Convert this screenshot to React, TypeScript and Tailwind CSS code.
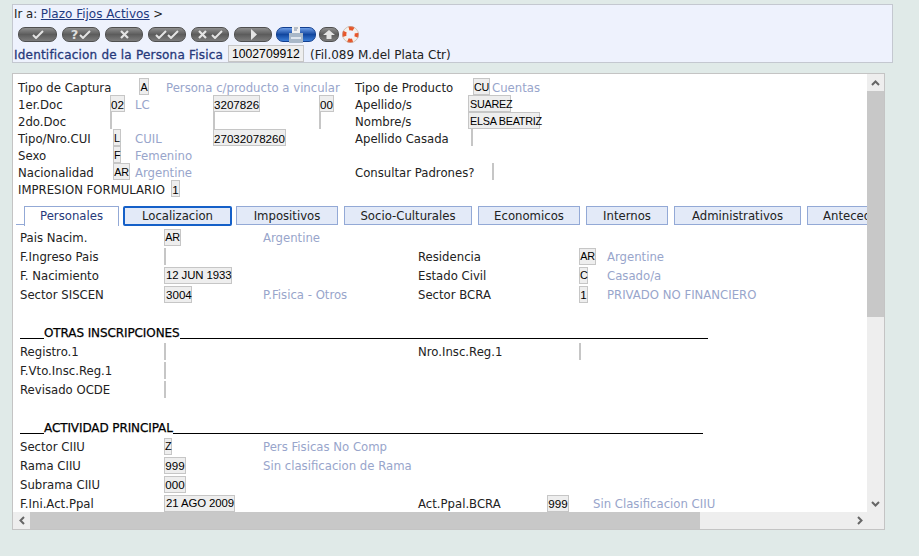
import React from 'react';

const TOP = 'leading-[17px]';
const BODY = 'leading-[15px]';
const CAPS = 'text-[10.8px] tracking-[-0.25px]';
const DATE = 'text-[11.4px] tracking-[-0.1px]';

function Field({ value = '', className = '', lh = TOP }: { value?: string; className?: string; lh?: string }) {
  return (
    <span className={`block h-[17px] shrink-0 whitespace-nowrap border border-[#c6c6c6] bg-[#eeeeee] font-['Liberation_Sans',sans-serif] text-black ${lh} ${className}`}>
      {value}
    </span>
  );
}

function Muted({ children }: { children: React.ReactNode }) {
  return <span className="text-[#98a5cb]">{children}</span>;
}

function ToolButton({ children, blue = false, className = 'w-[38px]' }: { children: React.ReactNode; blue?: boolean; className?: string }) {
  const tone = blue
    ? 'border-[#123f8f] bg-gradient-to-b from-[#6f9fe8] via-[#12479f] to-[#3b7ed8]'
    : 'border-[#4f4f4f] bg-gradient-to-b from-[#8f8f8f] via-[#5c5c5c] to-[#7c7c7c]';
  return (
    <span className={`flex h-[15px] shrink-0 items-center justify-center rounded-[7px] border ${tone} ${className}`}>
      {children}
    </span>
  );
}

const Check = () => (
  <svg width="12" height="9" viewBox="0 0 12 9" fill="none" stroke="#e4e4e4" strokeWidth="2"><path d="M1 5l3 3 7-7" /></svg>
);
const Cross = () => (
  <svg width="9" height="9" viewBox="0 0 9 9" fill="none" stroke="#e4e4e4" strokeWidth="2.2"><path d="M1 1l7 7M8 1l-7 7" /></svg>
);

function Tab({ label, className }: { label: string; className: string }) {
  return (
    <div className={`flex h-[19px] shrink-0 items-center justify-center border border-[#93a9d6] bg-[#e3eaf8] pt-[2px] ${className}`}>
      {label}
    </div>
  );
}

function Row({ children }: { children: React.ReactNode }) {
  return <div className="flex h-[17px] text-[11.7px] leading-[21px]">{children}</div>;
}

function BodyRow({ children }: { children: React.ReactNode }) {
  return <div className="flex h-[19px] items-start leading-[19px]">{children}</div>;
}

function Section({ title, className }: { title: string; className: string }) {
  return (
    <div className={`mt-[19px] flex h-[19px] leading-[19px] ${className}`}>
      <span className="h-[15px] w-[24px] shrink-0 border-b border-black" />
      <span className="text-[12px] tracking-[-0.1px] text-black [-webkit-text-stroke:0.25px_#000]">{title}</span>
      <span className="h-[15px] flex-1 border-b border-black" />
    </div>
  );
}

export default function App() {
  return (
    <div className="h-[556px] w-[919px] overflow-hidden bg-[#e0eae8] pl-3 pt-1 font-['DejaVu_Sans',sans-serif] text-[11.7px] text-[#222]">
      {/* cabecera */}
      <div className="h-[59px] w-[881px] border border-[#c4c8d0] bg-[#eef2fd] pl-[1px]">
        <div className="h-[19px] pt-[1px] leading-[17px]">
          Ir a: <span className="text-[12px] text-[#1f3a80] underline">Plazo Fijos Activos</span> &gt;
        </div>
        <div className="flex h-[21px] items-center gap-[5px] pb-[1px] pl-[4px]">
          <ToolButton className="w-[39px]"><Check /></ToolButton>
          <ToolButton><span className="mr-[1px] text-[13px] font-bold leading-none text-[#ddd]">?</span><Check /></ToolButton>
          <ToolButton><Cross /></ToolButton>
          <ToolButton><Check /><Check /></ToolButton>
          <ToolButton><Cross /><span className="w-1" /><Check /></ToolButton>
          <ToolButton>
            <svg width="7" height="11" viewBox="0 0 7 11" fill="#e4e4e4"><path d="M1 0l6 5.5L1 11z" /></svg>
          </ToolButton>
          <ToolButton blue className="-ml-[1px] w-[40px]">
            <svg width="20" height="17" viewBox="0 0 20 17" className="shrink-0">
              <path d="M6 0h8v7H6z" fill="#f2f2f2" />
              <path d="M8 2h4M8 4h3" stroke="#7a8aa0" />
              <path d="M3 7h14v10H3z" fill="#a9b8c8" />
              <path d="M5 11h10v2H5z" fill="#dfe6ee" />
            </svg>
          </ToolButton>
          <ToolButton className="-ml-[2px] w-[20px]">
            <svg width="12" height="9" viewBox="0 0 12 9" fill="#e4e4e4"><path d="M6 0l6 5H8.5v4h-5V5H0z" /></svg>
          </ToolButton>
          <svg width="17" height="17" viewBox="0 0 17 17" className="-ml-[2px] shrink-0">
            <circle cx="8.5" cy="8.5" r="6.2" fill="none" stroke="#f4f0ea" strokeWidth="4" />
            <circle cx="8.5" cy="8.5" r="6.2" fill="none" stroke="#e8562a" strokeWidth="4" strokeDasharray="4.9 4.84" strokeDashoffset="2.4" />
            <circle cx="8.5" cy="8.5" r="8" fill="none" stroke="#b8a89a" strokeWidth="0.6" />
          </svg>
        </div>
        <div className="flex h-[17px] text-[12px] leading-[21px]">
          <span className="w-[214px] text-[#27397a] tracking-[0.2px] [-webkit-text-stroke:0.3px_#27397a]">Identificacion de la Persona Fisica</span>
          <Field value="1002709912" className="w-[76px] pl-[3px] text-[12.2px]" />
          <span className="ml-[6px]">(Fil.089 M.del Plata Ctr)</span>
        </div>
      </div>

      {/* panel principal */}
      <div className="mt-[10px] flex h-[457px] w-[873px] flex-col border border-[#c4c4c4] bg-white">
        <div className="flex min-h-0 flex-1">
          <div className="w-[854px] overflow-hidden pl-[5px] pt-[4px]">
            <Row>
              <span className="w-[121px]">Tipo de Captura</span>
              <Field value="A" className={`w-[10px] text-center ${CAPS}`} />
              <span className="ml-[17px] w-[189px]"><Muted>Persona c/producto a vincular</Muted></span>
              <span className="w-[118px]">Tipo de Producto</span>
              <Field value="CU" className={`w-[17px] text-center ${CAPS}`} />
              <span className="ml-[2px]"><Muted>Cuentas</Muted></span>
            </Row>
            <Row>
              <span className="w-[92px]">1er.Doc</span>
              <Field value="02" className="w-[15px] text-center text-[11.6px]" />
              <span className="ml-[10px] w-[78px]"><Muted>LC</Muted></span>
              <Field value="3207826" className="w-[47px] text-[11.6px]" />
              <span className="w-[59px]" />
              <Field value="00" className="w-[15px] text-center text-[11.6px]" />
              <span className="ml-[21px] w-[113px]">Apellido/s</span>
              <Field value="SUAREZ" className={`w-[43px] pl-[1px] ${CAPS}`} />
            </Row>
            <Row>
              <span className="w-[92px]">2do.Doc</span>
              <Field className="w-[2px]" />
              <span className="w-[101px]" />
              <Field className="w-[2px]" />
              <span className="w-[104px]" />
              <Field className="w-[2px]" />
              <span className="ml-[34px] w-[113px]">Nombre/s</span>
              <Field value="ELSA BEATRIZ" className={`w-[72px] pl-[1px] ${CAPS}`} />
            </Row>
            <Row>
              <span className="w-[95px]">Tipo/Nro.CUI</span>
              <Field value="L" className={`w-[8px] text-center ${CAPS}`} />
              <span className="ml-[14px] w-[78px]"><Muted>CUIL</Muted></span>
              <Field value="27032078260" className="w-[73px] text-[11.6px]" />
              <span className="ml-[69px] w-[116px]">Apellido Casada</span>
              <Field className="w-[2px]" />
            </Row>
            <Row>
              <span className="w-[95px]">Sexo</span>
              <Field value="F" className={`w-[8px] text-center ${CAPS}`} />
              <span className="ml-[14px]"><Muted>Femenino</Muted></span>
            </Row>
            <Row>
              <span className="w-[95px]">Nacionalidad</span>
              <Field value="AR" className={`w-[17px] text-center ${CAPS}`} />
              <span className="ml-[5px] w-[220px]"><Muted>Argentine</Muted></span>
              <span className="w-[137px]">Consultar Padrones?</span>
              <Field className="w-[2px]" />
            </Row>
            <Row>
              <span className="w-[153px]">IMPRESION FORMULARIO</span>
              <Field value="1" className="w-[9px] text-center text-[11.6px]" />
            </Row>

            {/* pestañas */}
            <div className="mt-[9px] flex h-[20px] items-start">
              <div className="-ml-[2px] h-[19px] w-[8px] shrink-0 border-b border-[#93a9d6]" />
              <div className="flex h-[20px] w-[95px] shrink-0 items-center justify-center border border-b-0 border-[#93a9d6] bg-white pt-[1px] text-[#27397a]">Personales</div>
              <div className="ml-[4px] flex h-[20px] w-[109px] shrink-0 items-center justify-center rounded-[2px] border-2 border-[#1560c8] bg-[#e3eaf8] pt-[1px]">Localizacion</div>
              <Tab label="Impositivos" className="ml-[4px] w-[102px]" />
              <Tab label="Socio-Culturales" className="ml-[6px] w-[128px]" />
              <Tab label="Economicos" className="ml-[6px] w-[102px]" />
              <Tab label="Internos" className="ml-[6px] w-[82px]" />
              <Tab label="Administrativos" className="ml-[6px] w-[127px]" />
              <div className="ml-[6px] flex h-[19px] w-[70px] shrink-0 items-center overflow-hidden whitespace-nowrap border border-[#93a9d6] bg-[#e3eaf8] pl-[15px] pt-[2px]">Antecedentes</div>
            </div>

            {/* contenido */}
            <div className="pl-[2px] pt-[3px]">
              <BodyRow>
                <span className="w-[144px]">Pais Nacim.</span>
                <Field lh={BODY} value="AR" className={`w-[17px] text-center ${CAPS}`} />
                <span className="ml-[82px]"><Muted>Argentine</Muted></span>
              </BodyRow>
              <BodyRow>
                <span className="w-[144px]">F.Ingreso Pais</span>
                <Field lh={BODY} className="w-[2px]" />
                <span className="ml-[252px] w-[161px]">Residencia</span>
                <Field lh={BODY} value="AR" className={`w-[17px] text-center ${CAPS}`} />
                <span className="ml-[11px]"><Muted>Argentine</Muted></span>
              </BodyRow>
              <BodyRow>
                <span className="w-[144px]">F. Nacimiento</span>
                <Field lh={BODY} value="12 JUN 1933" className={`w-[68px] pl-[1px] ${DATE}`} />
                <span className="ml-[186px] w-[161px]">Estado Civil</span>
                <Field lh={BODY} value="C" className={`w-[9px] text-center ${CAPS}`} />
                <span className="ml-[19px]"><Muted>Casado/a</Muted></span>
              </BodyRow>
              <BodyRow>
                <span className="w-[144px]">Sector SISCEN</span>
                <Field lh={BODY} value="3004" className="w-[28px] pl-[1px] text-[11.6px]" />
                <span className="ml-[71px] w-[155px]"><Muted>P.Fisica - Otros</Muted></span>
                <span className="w-[161px]">Sector BCRA</span>
                <Field lh={BODY} value="1" className="w-[9px] text-center text-[11.6px]" />
                <span className="ml-[19px]"><Muted>PRIVADO NO FINANCIERO</Muted></span>
              </BodyRow>

              <Section title="OTRAS INSCRIPCIONES" className="w-[688px]" />
              <BodyRow>
                <span className="w-[144px]">Registro.1</span>
                <Field lh={BODY} className="w-[2px]" />
                <span className="ml-[252px] w-[161px]">Nro.Insc.Reg.1</span>
                <Field lh={BODY} className="w-[2px]" />
              </BodyRow>
              <BodyRow>
                <span className="w-[144px]">F.Vto.Insc.Reg.1</span>
                <Field lh={BODY} className="w-[2px]" />
              </BodyRow>
              <BodyRow>
                <span className="w-[144px]">Revisado OCDE</span>
                <Field lh={BODY} className="w-[2px]" />
              </BodyRow>

              <Section title="ACTIVIDAD PRINCIPAL" className="w-[683px]" />
              <BodyRow>
                <span className="w-[144px]">Sector CIIU</span>
                <Field lh={BODY} value="Z" className={`w-[8px] text-center ${CAPS}`} />
                <span className="ml-[91px]"><Muted>Pers Fisicas No Comp</Muted></span>
              </BodyRow>
              <BodyRow>
                <span className="w-[144px]">Rama CIIU</span>
                <Field lh={BODY} value="999" className="w-[22px] text-center text-[11.6px]" />
                <span className="ml-[77px]"><Muted>Sin clasificacion de Rama</Muted></span>
              </BodyRow>
              <BodyRow>
                <span className="w-[144px]">Subrama CIIU</span>
                <Field lh={BODY} value="000" className="w-[22px] text-center text-[11.6px]" />
              </BodyRow>
              <BodyRow>
                <span className="w-[144px]">F.Ini.Act.Ppal</span>
                <Field lh={BODY} value="21 AGO 2009" className={`w-[71px] pl-[1px] ${DATE}`} />
                <span className="ml-[183px] w-[129px]">Act.Ppal.BCRA</span>
                <Field lh={BODY} value="999" className="w-[22px] text-center text-[11.6px]" />
                <span className="ml-[24px]"><Muted>Sin Clasificacion CIIU</Muted></span>
              </BodyRow>
            </div>
          </div>

          {/* barra vertical */}
          <div className="flex w-[17px] shrink-0 flex-col bg-[#eeeeee]">
            <div className="flex h-[17px] items-center justify-center">
              <svg width="9" height="6" viewBox="0 0 9 6" fill="none" stroke="#666" strokeWidth="2"><path d="M1 5l3.5-3.5L8 5" /></svg>
            </div>
            <div className="h-[226px] bg-[#c8c8c8]" />
            <div className="flex-1" />
            <div className="flex h-[17px] items-center justify-center">
              <svg width="9" height="6" viewBox="0 0 9 6" fill="none" stroke="#666" strokeWidth="2"><path d="M1 1l3.5 3.5L8 1" /></svg>
            </div>
          </div>
        </div>

        {/* barra horizontal */}
        <div className="flex h-[17px] shrink-0 bg-[#eeeeee]">
          <div className="flex w-[17px] items-center justify-center">
            <svg width="6" height="9" viewBox="0 0 6 9" fill="none" stroke="#666" strokeWidth="2"><path d="M5 1L1.5 4.5 5 8" /></svg>
          </div>
          <div className="w-[670px] bg-[#c8c8c8]" />
          <div className="flex-1" />
          <div className="flex w-[27px] items-center justify-start">
            <svg width="6" height="9" viewBox="0 0 6 9" fill="none" stroke="#666" strokeWidth="2"><path d="M1 1l3.5 3.5L1 8" /></svg>
          </div>
        </div>
      </div>
    </div>
  );
}
